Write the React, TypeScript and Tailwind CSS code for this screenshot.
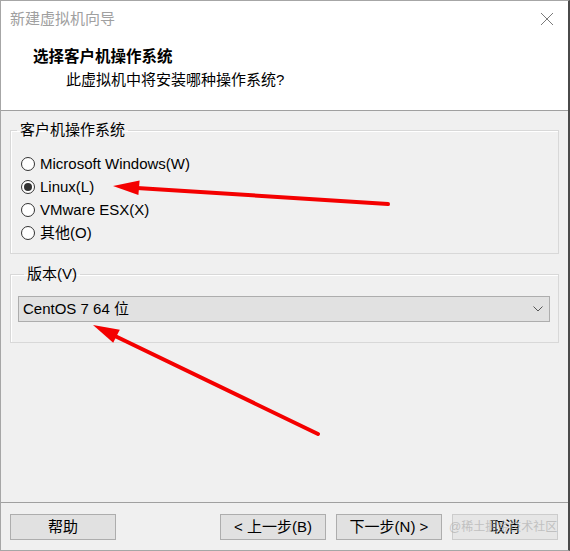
import React from "react";

const font = "font-['Liberation_Sans','Noto_Sans_CJK_SC',sans-serif]";

function Radio({ checked, label }: { checked?: boolean; label: string }) {
  return (
    <div className="flex h-[23px] items-center">
      <span className="ml-[10px] flex h-[14px] w-[14px] items-center justify-center rounded-full border border-[#333333] bg-white">
        {checked && <span className="h-[8px] w-[8px] rounded-full bg-[#333333]" />}
      </span>
      <span className="ml-[5px] text-[15px] leading-[20px] text-black">{label}</span>
    </div>
  );
}

function Btn({ children, disabled }: { children: React.ReactNode; disabled?: boolean }) {
  return (
    <div
      className={
        "flex h-[26px] w-[106px] items-center justify-center border text-[15px] leading-[20px] text-black " +
        (disabled ? "border-[#cccccc] bg-[#e6e6e6]" : "border-[#adadad] bg-[#e1e1e1]")
      }
    >
      {children}
    </div>
  );
}

export default function App() {
  return (
    <div className={"relative h-[551px] w-[570px] overflow-hidden " + font}>
      <div className="flex h-full w-full flex-col border-l border-t border-b border-[#a6a6a6] border-r-2 border-r-[#4a4a4a] bg-[#f0f0f0]">
        {/* header */}
        <div className="relative h-[110px] shrink-0 border-b border-[#a0a0a0] bg-white">
          <div className="flex items-center justify-between pt-[8px] pl-[9px] pr-[13px]">
            <span className="text-[15px] leading-[20px] text-[#a0a0a0]">新建虚拟机向导</span>
            <svg width="14" height="14" viewBox="0 0 14 14" className="mr-[1px]">
              <path d="M1 1 L13 13 M13 1 L1 13" stroke="#7a7a7a" strokeWidth="1" fill="none" />
            </svg>
          </div>
          <div className="mt-[18px] pl-[32px] text-[15.5px] font-bold leading-[20px] text-black">选择客户机操作系统</div>
          <div className="mt-[3px] pl-[65px] text-[15px] leading-[20px] text-black">此虚拟机中将安装哪种操作系统?</div>
        </div>

        {/* body */}
        <div className="flex flex-1 flex-col">
          <fieldset className="mt-[9px] ml-[9px] w-[549px] border border-[#d8d8d8] pb-[9px] pt-[12px] shadow-[inset_1px_1px_0_#ffffff]">
            <legend className="ml-[6px] px-[3px] text-[15px] leading-[20px] text-black">客户机操作系统</legend>
            <Radio label="Microsoft Windows(W)" />
            <Radio label="Linux(L)" checked />
            <Radio label="VMware ESX(X)" />
            <Radio label="其他(O)" />
          </fieldset>

          <fieldset className="mt-[10px] ml-[9px] w-[549px] border border-[#d8d8d8] pb-[20px] pl-[7px] pr-[8px] pt-[12px] shadow-[inset_1px_1px_0_#ffffff]">
            <legend className="ml-[6px] px-[3px] text-[15px] leading-[20px] text-black">版本(V)</legend>
            <div className="flex h-[26px] items-center justify-between border border-[#adadad] bg-[#e1e1e1] pl-[4px] pr-[6px]">
              <span className="text-[15px] leading-[20px] text-black">CentOS 7 64 位</span>
              <svg width="10" height="6" viewBox="0 0 10 6">
                <path d="M0.5 0.5 L5 5 L9.5 0.5" stroke="#555" strokeWidth="1" fill="none" />
              </svg>
            </div>
          </fieldset>
        </div>

        {/* footer */}
        <div className="h-[48px] shrink-0 border-t border-[#a0a0a0] pt-[11px]">
          <div className="flex items-center pl-[9px]">
            <Btn>帮助</Btn>
            <div className="ml-[104px]">
              <Btn>&lt; 上一步(B)</Btn>
            </div>
            <div className="ml-[10px]">
              <Btn>下一步(N) &gt;</Btn>
            </div>
            <div className="relative ml-[10px]">
              <Btn disabled>取消</Btn>
              <span className="pointer-events-none absolute left-[-3px] top-[5px] whitespace-nowrap text-[12px] leading-[16px] text-[#a8a8a8] opacity-60">
                @稀土掘金技术社区
              </span>
            </div>
          </div>
        </div>
      </div>

      {/* red annotation arrows */}
      <svg className="pointer-events-none absolute left-0 top-0" width="570" height="551" viewBox="0 0 570 551">
        <line x1="388" y1="204" x2="137" y2="188" stroke="#f40000" strokeWidth="4" strokeLinecap="round" />
        <polygon points="113,186 139.6,180.5 138.4,195" fill="#f40000" />
        <line x1="318" y1="434" x2="115" y2="336" stroke="#f40000" strokeWidth="4" strokeLinecap="round" />
        <polygon points="93,325 119.8,329.8 113.2,342.8" fill="#f40000" />
      </svg>
    </div>
  );
}
